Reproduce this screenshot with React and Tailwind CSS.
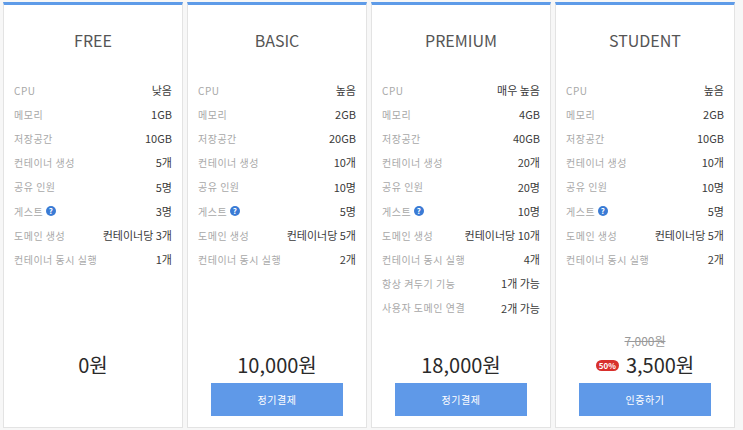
import React from "react";

const plans = [
    {
        name: "FREE",
        rows: [["CPU", "낮음"], ["메모리", "1GB"], ["저장공간", "10GB"], ["컨테이너 생성", "5개"], ["공유 인원", "5명"], ["게스트", "3명", true], ["도메인 생성", "컨테이너당 3개"], ["컨테이너 동시 실행", "1개"]],
        price: "0원",
    },
    {
        name: "BASIC",
        rows: [["CPU", "높음"], ["메모리", "2GB"], ["저장공간", "20GB"], ["컨테이너 생성", "10개"], ["공유 인원", "10명"], ["게스트", "5명", true], ["도메인 생성", "컨테이너당 5개"], ["컨테이너 동시 실행", "2개"]],
        price: "10,000원",
        button: "정기결제",
    },
    {
        name: "PREMIUM",
        rows: [["CPU", "매우 높음"], ["메모리", "4GB"], ["저장공간", "40GB"], ["컨테이너 생성", "20개"], ["공유 인원", "20명"], ["게스트", "10명", true], ["도메인 생성", "컨테이너당 10개"], ["컨테이너 동시 실행", "4개"], ["항상 켜두기 기능", "1개 가능"], ["사용자 도메인 연결", "2개 가능"]],
        price: "18,000원",
        button: "정기결제",
    },
    {
        name: "STUDENT",
        rows: [["CPU", "높음"], ["메모리", "2GB"], ["저장공간", "10GB"], ["컨테이너 생성", "10개"], ["공유 인원", "10명"], ["게스트", "5명", true], ["도메인 생성", "컨테이너당 5개"], ["컨테이너 동시 실행", "2개"]],
        oldPrice: "7,000원",
        discount: "50%",
        price: "3,500원",
        button: "인증하기",
    },
];

function HelpIcon() {
    return (
        <span className="ml-[3px] inline-flex h-[10px] w-[10px] items-center justify-center rounded-full bg-[#3a7bd5] text-[8px] font-bold leading-none text-white">?</span>
    );
}

function PlanCard({ plan }) {
    return (
        <div className="flex w-[180px] flex-col border border-[#e3e3e3] border-t-[3px] border-t-[#5e9be8] bg-white">
            <div className="flex h-[73px] items-center justify-center pb-[4px] text-[16px] text-[#555]">{plan.name}</div>
            <div className="px-[10px]">
                {plan.rows.map(([label, value, help]) => (
                    <div key={label} className="flex h-[24.2px] items-center justify-between">
                        <span className="flex items-center text-[10px] tracking-[0.5px] text-[#a8a8a8]">
                            {label}
                            {help && <HelpIcon />}
                        </span>
                        <span className="text-[11px] text-[#3a3a3a]">{value}</span>
                    </div>
                ))}
            </div>
            <div className="flex-1" />
            <div className="flex h-[50px] flex-col items-center justify-end pb-[5px]">
                {plan.oldPrice && <div className="mb-[2px] text-[12px] text-[#999] line-through">{plan.oldPrice}</div>}
                <div className="flex items-center">
                    {plan.discount && (
                        <span className="mr-[7px] rounded-full bg-[#d8302c] px-[3px] py-[1px] text-[8px] font-bold leading-[9px] text-white">{plan.discount}</span>
                    )}
                    <span className="text-[20px] leading-[26px] text-[#2a2a2a]">{plan.price}</span>
                </div>
            </div>
            <div className="flex h-[33px] justify-center">
                {plan.button && (
                    <button className="w-[132px] bg-[#5f99e8] text-[10px] tracking-[0.5px] text-white">{plan.button}</button>
                )}
            </div>
            <div className="h-[11px]" />
        </div>
    );
}

export default function App() {
    return (
        <div className="flex h-[430px] w-[743px] gap-[4px] bg-[#f7f7f7] pb-[2px] pl-[3px] pt-[2px] font-['Noto_Sans_CJK_KR','Noto_Sans',sans-serif]">
            {plans.map((plan) => (
                <PlanCard key={plan.name} plan={plan} />
            ))}
        </div>
    );
}
